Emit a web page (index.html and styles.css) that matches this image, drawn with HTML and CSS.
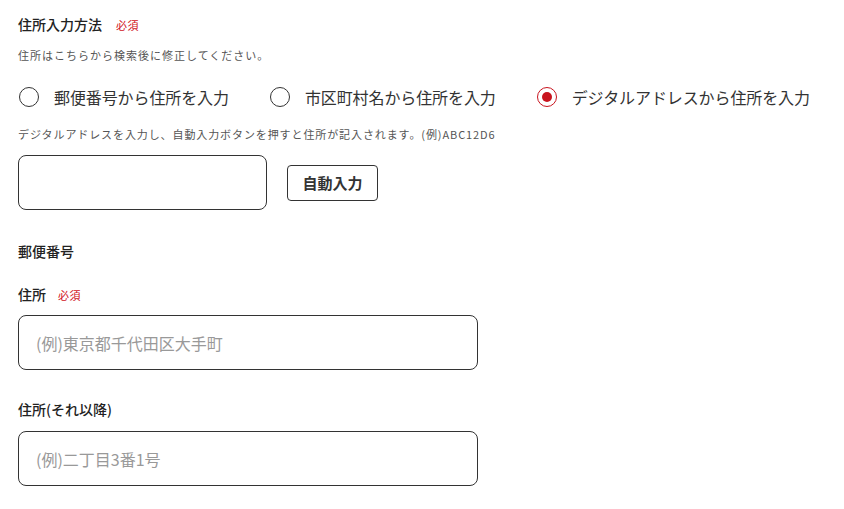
FILE: index.html
```html
<!DOCTYPE html>
<html lang="ja">
<head>
<meta charset="utf-8">
<link rel="stylesheet" href="styles.css">
</head>
<body>
<div class="form">
  <div class="title">住所入力方法<span class="req">必須</span></div>
  <div class="help help1">住所はこちらから検索後に修正してください。</div>
  <div class="radios">
    <label class="radio"><span class="circle"></span><span class="rlabel">郵便番号から住所を入力</span></label>
    <label class="radio"><span class="circle"></span><span class="rlabel">市区町村名から住所を入力</span></label>
    <label class="radio"><span class="circle on"></span><span class="rlabel">デジタルアドレスから住所を入力</span></label>
  </div>
  <div class="help help2">デジタルアドレスを入力し、自動入力ボタンを押すと住所が記入されます。(例)ABC12D6</div>
  <div class="digrow">
    <div class="box small"></div>
    <div class="btn">自動入力</div>
  </div>
  <div class="label zip">郵便番号</div>
  <div class="label addr">住所<span class="req">必須</span></div>
  <div class="box wide"><span class="ph">(例)東京都千代田区大手町</span></div>
  <div class="label addr2">住所(それ以降)</div>
  <div class="box wide b2"><span class="ph">(例)二丁目3番1号</span></div>
</div>
</body>
</html>
```

FILE: styles.css
```css
html, body {
  margin: 0;
  padding: 0;
  background: #fff;
}
body {
  font-family: "Noto Sans CJK JP", "Noto Sans", sans-serif;
  color: #333;
}
.form {
  display: flex;
  flex-direction: column;
  align-items: flex-start;
  padding: 14px 0 0 18px;
}
.title {
  font-size: 14px;
  line-height: 20px;
  font-weight: 500;
  color: #222;
}
.req {
  color: #d0121b;
  font-size: 11px;
  font-weight: 400;
  margin-left: 14px;
  letter-spacing: 0.5px;
}
.help {
  font-size: 11px;
  letter-spacing: 1px;
  line-height: 16px;
  color: #555;
}
.help1 { margin-top: 12px; }
.help2 { margin-top: 19px; letter-spacing: 0.9px; }
.radios {
  display: flex;
  align-items: center;
  gap: 41px;
  margin-top: 24px;
  margin-left: 1px;
  height: 20px;
}
.radio {
  display: flex;
  align-items: center;
  gap: 15px;
}
.circle {
  width: 20px;
  height: 20px;
  box-sizing: border-box;
  border: 1.5px solid #333;
  border-radius: 50%;
  display: flex;
  align-items: center;
  justify-content: center;
}
.circle.on {
  border-color: #c8141e;
}
.circle.on::after {
  content: "";
  width: 10px;
  height: 10px;
  border-radius: 50%;
  background: #c8141e;
}
.rlabel {
  font-size: 16px;
  line-height: 20px;
  color: #333;
  letter-spacing: -0.1px;
}
.digrow {
  display: flex;
  align-items: center;
  gap: 20px;
  margin-top: 13px;
}
.box {
  box-sizing: border-box;
  border: 1px solid #333;
  border-radius: 8px;
  height: 55px;
  display: flex;
  align-items: center;
  padding-left: 17px;
}
.small { width: 249px; }
.wide { width: 460px; margin-top: 10px; }
.b2 { margin-top: 12px; }
.btn {
  box-sizing: border-box;
  width: 91px;
  height: 36px;
  border: 1px solid #333;
  border-radius: 4px;
  display: flex;
  align-items: center;
  justify-content: center;
  font-size: 15px;
  font-weight: 700;
  color: #333;
}
.label {
  font-size: 14px;
  line-height: 20px;
  font-weight: 500;
  color: #222;
}
.zip { margin-top: 31px; }
.addr { margin-top: 23px; }
.addr2 { margin-top: 29px; }
.addr .req { margin-left: 12px; }
.ph {
  font-size: 16px;
  color: #999;
}
```
